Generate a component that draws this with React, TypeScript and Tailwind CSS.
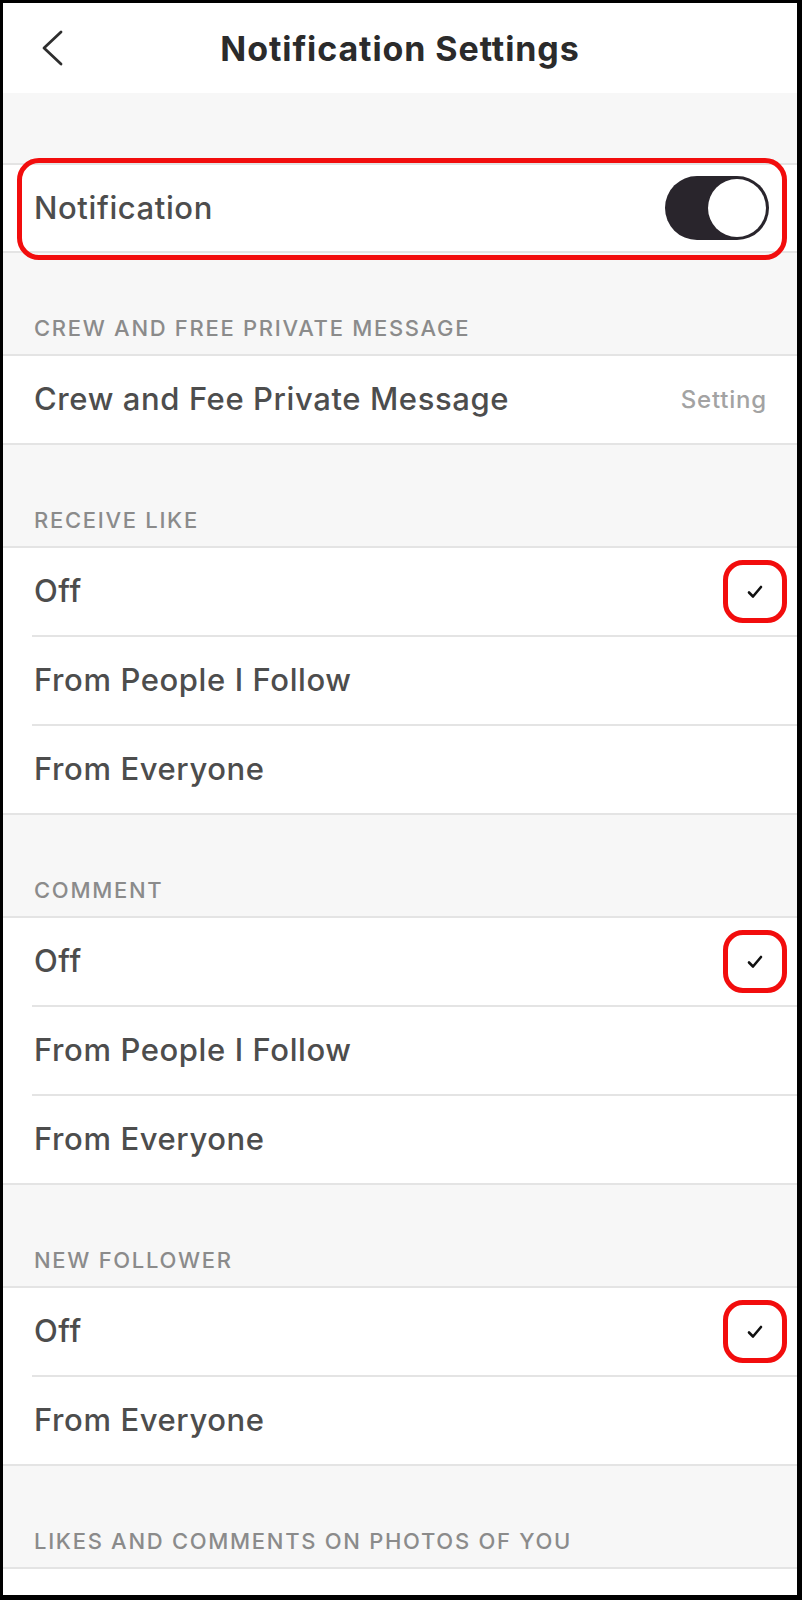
import React from 'react'

const LINE = 'bg-[#e4e4e4]'
const ROW_TEXT = 'text-[31px] tracking-[0.6px] font-medium text-[#4d4d4d]'

type Option = { label: string; checked?: boolean }

const sections: { title: string; options: Option[] }[] = [
    {
        title: 'Receive Like',
        options: [{ label: 'Off', checked: true }, { label: 'From People I Follow' }, { label: 'From Everyone' }],
    },
    {
        title: 'Comment',
        options: [{ label: 'Off', checked: true }, { label: 'From People I Follow' }, { label: 'From Everyone' }],
    },
    {
        title: 'New Follower',
        options: [{ label: 'Off', checked: true }, { label: 'From Everyone' }],
    },
]

function SectionTitle({ children }: { children: React.ReactNode }) {
    return (
        <div className="h-[101px] flex items-end pb-[15px] pl-[31px] text-[22px] leading-[22px] tracking-[1.7px] font-medium uppercase text-[#8b8b8b]">
            {children}
        </div>
    )
}

function Check() {
    return (
        <div className="w-[64px] h-[63px] rounded-[20px] border-[5px] border-[#f20d0d] flex items-center justify-center">
            <svg width="16" height="14" viewBox="0 0 16 14" fill="none">
                <path d="M2 7.5 L6 11.5 L14 2" stroke="#111" strokeWidth="2.6" strokeLinecap="round" strokeLinejoin="round" />
            </svg>
        </div>
    )
}

function OptionGroup({ options }: { options: Option[] }) {
    return (
        <div className="bg-white border-y-2 border-[#e4e4e4]">
            {options.map((o, i) => (
                <div key={o.label}>
                    {i > 0 && <div className={`ml-[29px] h-[2px] ${LINE}`} />}
                    <div className="h-[87px] flex items-center justify-between pl-[31px] pr-[10px]">
                        <span className={ROW_TEXT}>{o.label}</span>
                        {o.checked && <Check />}
                    </div>
                </div>
            ))}
        </div>
    )
}

export default function App() {
    return (
        <div className="w-[802px] h-[1600px] overflow-hidden border-l-[3px] border-t-[3px] border-r-[5px] border-b-[5px] border-black bg-[#f7f7f7] font-[family-name:Inter,'Liberation_Sans',sans-serif]">
            <header className="h-[90px] bg-white grid grid-cols-[1fr_auto_1fr] items-center">
                <button className="pl-[38px] flex items-center">
                    <svg width="24" height="36" viewBox="0 0 24 36" fill="none">
                        <path d="M20 2 L3 18 L20 34" stroke="#2e2e2e" strokeWidth="2.8" strokeLinecap="round" strokeLinejoin="round" />
                    </svg>
                </button>
                <h1 className="text-[34px] font-bold text-[#2b2b2b] tracking-[0.9px]">Notification Settings</h1>
                <div />
            </header>

            <div className="h-[70px]" />

            <div className="relative bg-white border-y-2 border-[#e4e4e4]">
                <div className="h-[86px] flex items-center justify-between pl-[31px] pr-[28px]">
                    <span className={ROW_TEXT}>Notification</span>
                    <div className="w-[104px] h-[64px] rounded-full bg-[#29252c] p-[3px] flex justify-end">
                        <div className="w-[58px] h-[58px] rounded-full bg-white" />
                    </div>
                </div>
                <div className="absolute left-[14px] right-[10px] -top-[7px] -bottom-[9px] rounded-[22px] border-[5px] border-[#f20d0d]" />
            </div>

            <SectionTitle>Crew and Free Private Message</SectionTitle>
            <div className="bg-white border-y-2 border-[#e4e4e4]">
                <div className="h-[87px] flex items-center justify-between pl-[31px] pr-[30px]">
                    <span className={ROW_TEXT}>Crew and Fee Private Message</span>
                    <span className="text-[24px] tracking-[0.8px] font-medium text-[#a3a3a3]">Setting</span>
                </div>
            </div>

            {sections.map(s => (
                <div key={s.title}>
                    <SectionTitle>{s.title}</SectionTitle>
                    <OptionGroup options={s.options} />
                </div>
            ))}

            <SectionTitle>Likes and Comments on Photos of You</SectionTitle>
            <div className="h-[87px] bg-white border-t-2 border-[#e4e4e4]" />
        </div>
    )
}
